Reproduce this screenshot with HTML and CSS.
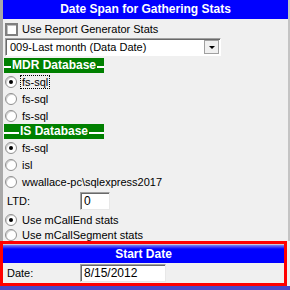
FILE: index.html
```html
<!DOCTYPE html>
<html lang="en">
<head>
    <meta charset="UTF-8">
    <title>Date Span for Gathering Stats</title>
    <link rel="stylesheet" href="styles.css">
</head>
<body>

<div class="upper">
    <div class="title-bar">Date Span for Gathering Stats</div>

    <div class="check-row">
        <span class="checkbox"></span>
        <span>Use Report Generator Stats</span>
    </div>

    <div class="select-box">
        <span class="select-text">009-Last month (Data Date)</span>
        <span class="drop-btn"><span class="arrow"></span></span>
    </div>

    <div class="group-label">MDR Database</div>
    <div class="radio-row"><span class="radio checked"></span><span class="focus">fs-sql</span></div>
    <div class="radio-row"><span class="radio"></span><span>fs-sql</span></div>
    <div class="radio-row"><span class="radio"></span><span>fs-sql</span></div>

    <div class="group-label">IS Database</div>
    <div class="radio-row"><span class="radio checked"></span><span>fs-sql</span></div>
    <div class="radio-row"><span class="radio"></span><span>isl</span></div>
    <div class="radio-row"><span class="radio"></span><span>wwallace-pc\sqlexpress2017</span></div>

    <div class="field-row ltd-row">
        <span class="field-label">LTD:</span>
        <span class="text-input ltd-input">0</span>
    </div>

    <div class="radio-row"><span class="radio checked"></span><span>Use mCallEnd stats</span></div>
    <div class="radio-row last-row"><span class="radio"></span><span>Use mCallSegment stats</span></div>
</div>

<div class="start-box">
    <div class="start-title">Start Date</div>
    <div class="field-row date-row">
        <span class="field-label">Date:</span>
        <span class="text-input date-input">8/15/2012</span>
    </div>
</div>

<div class="bottom-strip"></div>

</body>
</html>
```

FILE: styles.css
```css
body {
    margin: 0;
    width: 290px;
    height: 290px;
    overflow: hidden;
    background-color: #f0f0f0;
    font-family: "Liberation Sans", Arial, sans-serif;
    font-size: 11px;
    color: #000;
}

.upper {
    height: 241px;
    border-left: 3px solid #a8a8a8;
    border-right: 2px solid #c4c4c4;
    box-sizing: border-box;
}

/* barra azul del titulo */
.title-bar {
    height: 19px;
    line-height: 19px;
    background-color: #0000ff;
    color: #fff;
    font-weight: bold;
    font-size: 12px;
    text-align: center;
}

.check-row {
    height: 18px;
    display: flex;
    align-items: center;
    gap: 4px;
    padding-left: 2px;
    margin-top: 1px;
}

.checkbox {
    width: 9px;
    height: 9px;
    background-color: #fff;
    border: 2px solid #808080;
    box-shadow: inset 1px 1px 0 #c0c0c0;
}

.select-box {
    width: 216px;
    height: 18px;
    margin: 0 0 2px 2px;
    display: flex;
    align-items: center;
    background-color: #fff;
    border: 1px solid;
    border-color: #a0a0a0 #fff #fff #a0a0a0;
    box-shadow: inset 1px 1px 0 #696969;
    box-sizing: border-box;
}

.select-text {
    flex: 1;
    padding-left: 4px;
}

.drop-btn {
    width: 15px;
    height: 14px;
    margin-right: 1px;
    background-color: #f0f0f0;
    border: 1px solid #a0a0a0;
    box-sizing: border-box;
    display: flex;
    align-items: center;
    justify-content: center;
}

.arrow {
    width: 0;
    height: 0;
    border-left: 3px solid transparent;
    border-right: 3px solid transparent;
    border-top: 3px solid #000;
}

/* etiquetas verdes de grupo */
.group-label {
    width: 100px;
    height: 15px;
    margin-left: 1px;
    background-color: #008000;
    color: #fff;
    font-weight: bold;
    font-size: 12px;
    display: flex;
    align-items: center;
    line-height: 15px;
}

.group-label::before,
.group-label::after {
    content: "";
    flex: 1;
    height: 2px;
    background-color: #fff;
    margin-top: 3px;
}

.group-label::before {
    margin-right: 1px;
}

.group-label::after {
    margin-left: 1px;
}

.radio-row {
    height: 17px;
    display: flex;
    align-items: center;
    gap: 5px;
    padding-left: 2px;
}

.radio {
    width: 10px;
    height: 10px;
    border-radius: 50%;
    background-color: #fff;
    border: 1px solid #909090;
    box-shadow: inset 1px 1px 0 #d0d0d0;
    display: flex;
    align-items: center;
    justify-content: center;
}

.radio.checked::after {
    content: "";
    width: 4px;
    height: 4px;
    border-radius: 50%;
    background-color: #000;
}

.focus {
    outline: 1px dotted #000;
    padding: 0 1px;
    margin-left: -1px;
}

.last-row {
    height: 14px;
}

.field-row {
    display: flex;
    align-items: center;
    padding-left: 4px;
}

.ltd-row {
    height: 21px;
}

.field-label {
    width: 73px;
}

.text-input {
    height: 18px;
    line-height: 16px;
    padding-left: 3px;
    background-color: #fff;
    border: 1px solid;
    border-color: #a0a0a0 #e8e8e8 #e8e8e8 #a0a0a0;
    box-shadow: inset 1px 1px 0 #696969;
    box-sizing: border-box;
    font-size: 12px;
}

.ltd-input {
    width: 30px;
}

/* recuadro rojo de fecha inicial */
.start-box {
    position: relative;
    width: 287px;
    height: 45px;
    border: 3px solid #ff0000;
    box-sizing: border-box;
    background-color: #f0f0f0;
}

.start-title {
    height: 18px;
    line-height: 19px;
    border-top: 1px solid #c8c8d8;
    background: linear-gradient(#8080f0, #0000ff 4px);
    color: #fff;
    font-weight: bold;
    font-size: 12px;
    text-align: center;
}

.date-row {
    height: 20px;
    padding-left: 4px;
}

.date-input {
    width: 86px;
}

.bottom-strip {
    height: 4px;
    background-color: #4848c8;
}
```
